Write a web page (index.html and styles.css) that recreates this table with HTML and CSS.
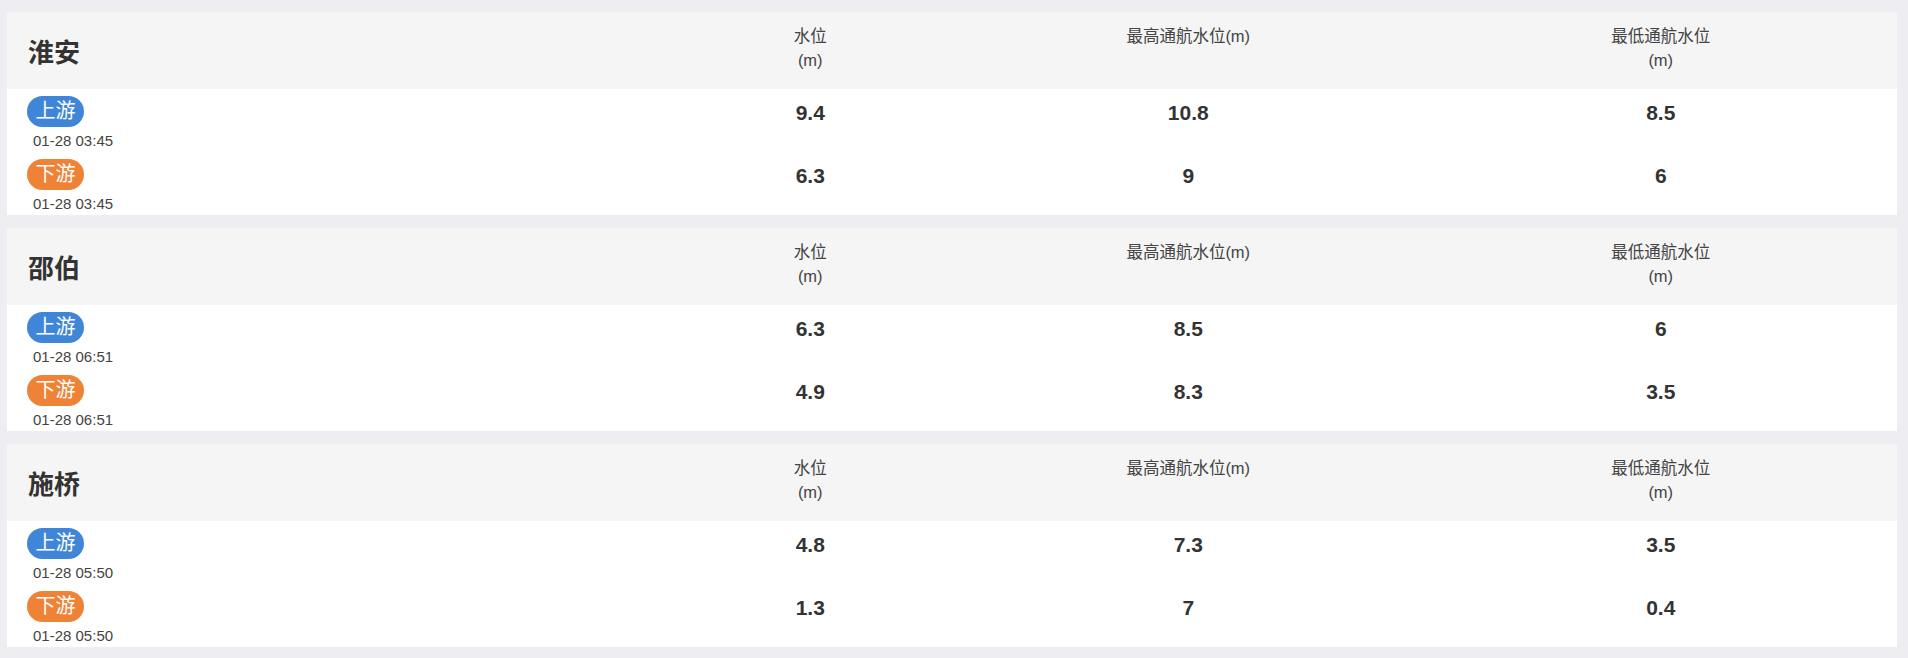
FILE: index.html
```html
<!DOCTYPE html>
<html lang="zh-CN">
<head>
<meta charset="utf-8">
<title>水位</title>
<link rel="stylesheet" href="styles.css">
</head>
<body>
<div class="page">
  <section class="card">
    <div class="row head">
      <div class="name">淮安</div>
      <div class="label">水位<br>(m)</div>
      <div class="label">最高通航水位(m)</div>
      <div class="label">最低通航水位<br>(m)</div>
    </div>
    <div class="row data">
      <div class="station"><span class="badge up">上游</span><div class="time">01-28 03:45</div></div>
      <div class="val">9.4</div><div class="val">10.8</div><div class="val">8.5</div>
    </div>
    <div class="row data">
      <div class="station"><span class="badge down">下游</span><div class="time">01-28 03:45</div></div>
      <div class="val">6.3</div><div class="val">9</div><div class="val">6</div>
    </div>
  </section>
  <section class="card">
    <div class="row head">
      <div class="name">邵伯</div>
      <div class="label">水位<br>(m)</div>
      <div class="label">最高通航水位(m)</div>
      <div class="label">最低通航水位<br>(m)</div>
    </div>
    <div class="row data">
      <div class="station"><span class="badge up">上游</span><div class="time">01-28 06:51</div></div>
      <div class="val">6.3</div><div class="val">8.5</div><div class="val">6</div>
    </div>
    <div class="row data">
      <div class="station"><span class="badge down">下游</span><div class="time">01-28 06:51</div></div>
      <div class="val">4.9</div><div class="val">8.3</div><div class="val">3.5</div>
    </div>
  </section>
  <section class="card">
    <div class="row head">
      <div class="name">施桥</div>
      <div class="label">水位<br>(m)</div>
      <div class="label">最高通航水位(m)</div>
      <div class="label">最低通航水位<br>(m)</div>
    </div>
    <div class="row data">
      <div class="station"><span class="badge up">上游</span><div class="time">01-28 05:50</div></div>
      <div class="val">4.8</div><div class="val">7.3</div><div class="val">3.5</div>
    </div>
    <div class="row data">
      <div class="station"><span class="badge down">下游</span><div class="time">01-28 05:50</div></div>
      <div class="val">1.3</div><div class="val">7</div><div class="val">0.4</div>
    </div>
  </section>
</div>
</body>
</html>
```

FILE: styles.css
```css
html, body {
  margin: 0;
  padding: 0;
  background: #eeeef2;
}
body {
  font-family: "Liberation Sans", "Noto Sans CJK SC", sans-serif;
  color: #3a3a3a;
}
.page {
  display: flex;
  flex-direction: column;
  gap: 13px;
  padding: 12px 11px 11px 7px;
}
.card {
  background: #fff;
}
.row {
  display: grid;
  grid-template-columns: 35% 15% 25% 25%;
}
.head {
  background: #f5f5f5;
  height: 77px;
}
.name {
  align-self: center;
  padding-left: 21px;
  font-size: 26px;
  font-weight: bold;
  color: #333;
}
.label {
  text-align: center;
  padding-top: 12px;
  font-size: 16.5px;
  line-height: 24px;
  color: #444;
}
.data {
  height: 63px;
  box-sizing: border-box;
  padding-top: 7px;
}
.station {
  padding-left: 20px;
}
.badge {
  display: inline-block;
  height: 31px;
  line-height: 31px;
  padding: 0 8.5px;
  border-radius: 16px;
  color: #fff;
  font-size: 20px;
}
.badge.up {
  background: #3f86d8;
}
.badge.down {
  background: #ee8237;
}
.time {
  margin-top: 4px;
  padding-left: 6px;
  font-size: 15px;
  line-height: 20px;
  color: #444;
}
.val {
  text-align: center;
  font-size: 21px;
  line-height: 33px;
  font-weight: bold;
  color: #333;
}
```
